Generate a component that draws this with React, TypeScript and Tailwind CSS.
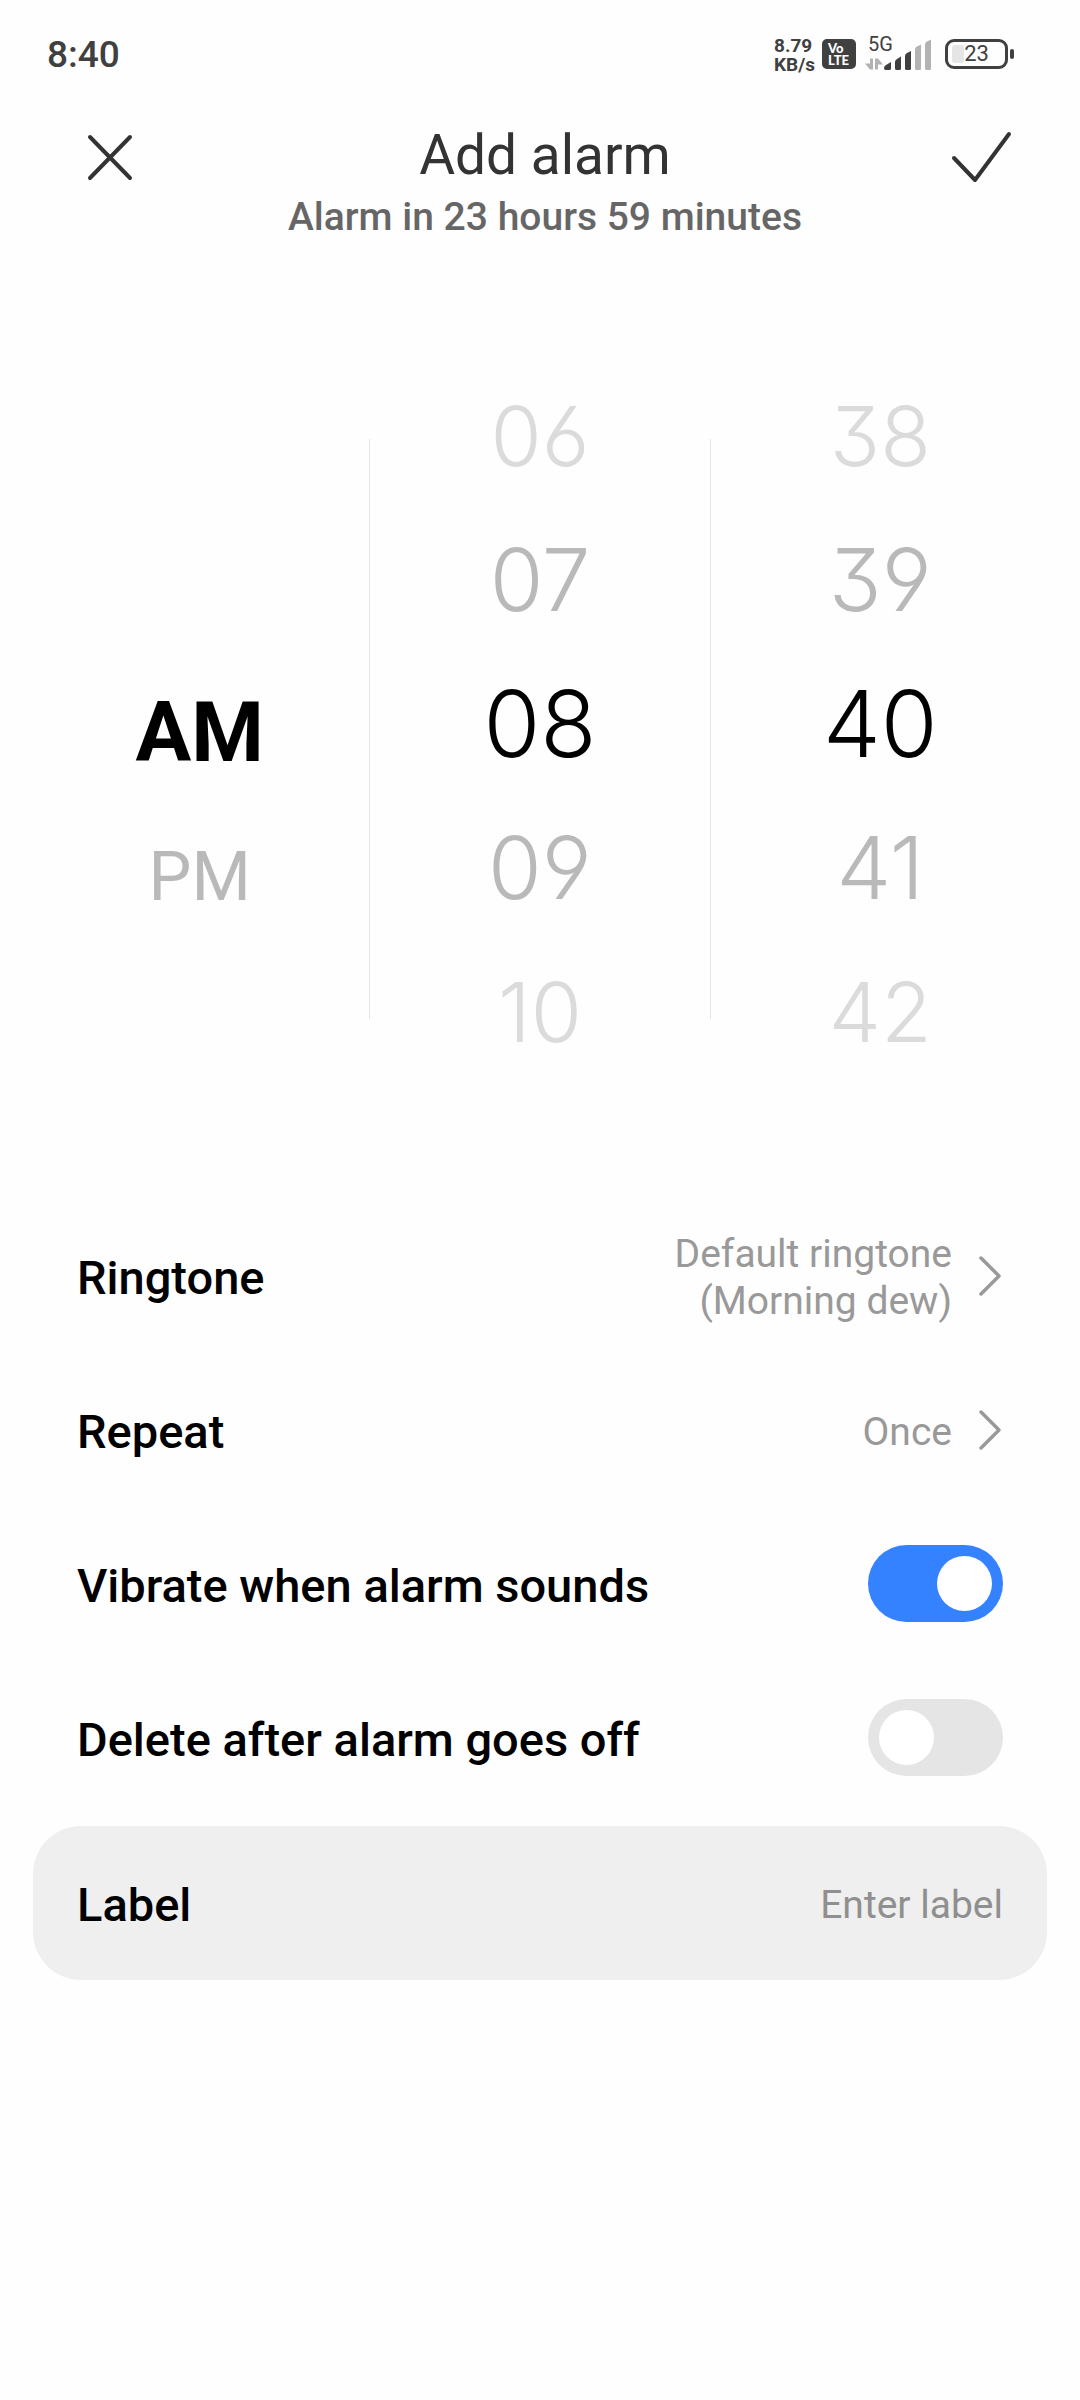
import { useState } from 'react';

function StatusBar() {
  return (
    <div className="flex h-[104px] items-center justify-between pt-1 pr-[66px] pl-[47px] text-[#404040]">
      <time className="text-[37px] leading-none font-medium">8:40</time>
      <div className="flex items-center">
        <div className="w-[48px] pt-[2px] text-[19px] leading-[19px] font-bold">
          <div>8.79</div>
          <div>KB/s</div>
        </div>
        <div className="flex h-[30px] w-[34px] flex-col justify-center rounded-[5px] bg-[#404040] pl-[6px] font-[Lato,sans-serif] text-[13px] leading-[12px] font-black text-white">
          <span>Vo</span>
          <span>LTE</span>
        </div>
        <div className="relative ml-[9px] h-[34px] w-[68px]">
          <span className="absolute -top-[3px] left-[3px] text-[20px] leading-[20px]">5G</span>
          <svg className="h-full w-full" viewBox="0 0 68 34" aria-hidden="true">
            <g fill="#b3b3b3">
              <path d="M5 21.5v11h3v-11zM5 32.500L0 26.500h5zM10 21.500v11h3v-11zM13 21.500l5 6h-5z" />
              <path d="M50 12.500q0-2 2-3l4-2v24q0 1.500-1.500 1.500h-3q-1.500 0-1.500-1.500z" />
              <path d="M60 7.500q0-2 2-3l4-2v29q0 1.500-1.500 1.500h-3q-1.500 0-1.500-1.500z" />
            </g>
            <g fill="#404040">
              <path d="M19 31q0-2 2-3l5-3v6.500q0 1.500-1.500 1.500h-4q-1.500 0-1.500-2z" />
              <path d="M30 25q0-2 2-3l4-2.500v12q0 1.500-1.500 1.500h-3q-1.500 0-1.500-1.500z" />
              <path d="M40 19q0-2 2-3l4-2v17.500q0 1.500-1.500 1.500h-3q-1.500 0-1.500-1.500z" />
            </g>
          </svg>
        </div>
        <div className="ml-[12px] flex items-center gap-[2px]">
          <div className="relative flex h-[30px] w-[63px] items-center justify-center rounded-[9px] border-[3px] border-[#404040]">
            <span className="absolute top-[3px] bottom-[3px] left-[4px] w-[12px] rounded-[3px] bg-[#e5e5e5]" />
            <span className="relative text-[22px] leading-none">23</span>
          </div>
          <span className="h-[10px] w-[4px] rounded-full bg-[#404040]" />
        </div>
      </div>
    </div>
  );
}

function Header() {
  return (
    <header className="flex items-start justify-between px-[66px] pt-[20px]">
      <button type="button" aria-label="Close">
        <svg className="h-[76px] w-[98px]" viewBox="0 0 98 76" fill="none" stroke="#333" strokeWidth="4" strokeLinecap="round" aria-hidden="true">
          <path d="M24 13L64 54M64 13L24 54" />
        </svg>
      </button>
      <div className="text-center">
        <h1 className="text-[55px] leading-[62px] text-[#333]">Add alarm</h1>
        <p className="text-[39px] leading-[62px] font-medium text-[#666]">Alarm in 23 hours 59 minutes</p>
      </div>
      <button type="button" aria-label="Save">
        <svg className="h-[76px] w-[88px]" viewBox="0 0 88 76" fill="none" stroke="#333" strokeWidth="4" strokeLinecap="round" strokeLinejoin="round" aria-hidden="true">
          <path d="M28 34L49 56L83 10" />
        </svg>
      </button>
    </header>
  );
}

const rowStyle = [
  'text-[83px] text-[#dbdbdb]',
  'text-[87px] text-[#b9b9b9]',
  'text-[92px] text-black',
  'text-[87px] text-[#b9b9b9]',
  'text-[83px] text-[#dbdbdb]',
];

function NumberWheel({ label, values }: { label: string; values: string[] }) {
  return (
    <div
      role="listbox"
      aria-label={label}
      className="flex flex-1 flex-col font-[Inter,sans-serif] font-light [font-feature-settings:'cv03','cv04','cv09']"
    >
      {values.map((value, i) => (
        <button
          key={value}
          type="button"
          role="option"
          aria-selected={i === 2}
          className={`h-[144px] leading-[144px] ${rowStyle[i]}`}
        >
          {value}
        </button>
      ))}
    </div>
  );
}

function Divider() {
  return <div className="mt-[75px] mb-[65px] w-px bg-[#e4e4e4]" />;
}

function TimePicker() {
  return (
    <section aria-label="Time" className="mt-[116px] flex px-[30px]">
      <div role="listbox" aria-label="AM or PM" className="flex flex-1 flex-col pt-[297px]">
        <button type="button" role="option" aria-selected="true" className="h-[144px] text-[83px] leading-[144px] font-bold text-black">
          AM
        </button>
        <button type="button" role="option" aria-selected="false" className="h-[144px] text-[68px] leading-[144px] text-[#b9b9b9]">
          PM
        </button>
      </div>
      <Divider />
      <NumberWheel label="Hour" values={['06', '07', '08', '09', '10']} />
      <Divider />
      <NumberWheel label="Minute" values={['38', '39', '40', '41', '42']} />
    </section>
  );
}

function LinkRow({ title, lines }: { title: string; lines: string[] }) {
  return (
    <button type="button" className="flex h-[154px] w-full items-center justify-between px-[77px] text-left">
      <span className="pt-[6px] text-[47px] font-medium text-black">{title}</span>
      <span className="flex items-center gap-[24px]">
        <span className="pt-[6px] text-right text-[39px] leading-[47px] text-[#999]">
          {lines.map((line) => (
            <span key={line} className="block">
              {line}
            </span>
          ))}
        </span>
        <svg className="h-[44px] w-[27px]" viewBox="0 0 27 44" fill="none" stroke="#999" strokeWidth="3.500" strokeLinecap="round" strokeLinejoin="round" aria-hidden="true">
          <path d="M5 5L23 23L5 41" />
        </svg>
      </span>
    </button>
  );
}

function SwitchRow({ title, initial }: { title: string; initial: boolean }) {
  const [on, setOn] = useState(initial);
  return (
    <label className="flex h-[154px] items-center justify-between px-[77px]">
      <span className="pt-[6px] text-[47px] font-medium text-black">{title}</span>
      <input
        type="checkbox"
        role="switch"
        checked={on}
        onChange={() => setOn(!on)}
        className="flex h-[77px] w-[135px] appearance-none items-center rounded-full bg-[#e5e5e5] px-[11px] before:h-[55px] before:w-[55px] before:rounded-full before:bg-white checked:justify-end checked:bg-[#3482ff]"
      />
    </label>
  );
}

export default function App() {
  return (
    <main className="min-h-screen bg-[#fefefe] font-[Roboto,sans-serif]">
      <StatusBar />
      <Header />
      <TimePicker />
      <section aria-label="Alarm settings" className="mt-[114px]">
        <LinkRow title="Ringtone" lines={['Default ringtone', '(Morning dew)']} />
        <LinkRow title="Repeat" lines={['Once']} />
        <SwitchRow title="Vibrate when alarm sounds" initial={true} />
        <SwitchRow title="Delete after alarm goes off" initial={false} />
        <div className="mx-[33px] mt-[12px] flex h-[154px] items-center justify-between gap-8 rounded-[48px] bg-[#efefef] px-[44px]">
          <label htmlFor="alarm-label" className="pt-1 text-[47px] font-medium text-black">
            Label
          </label>
          <input
            id="alarm-label"
            type="text"
            placeholder="Enter label"
            className="min-w-0 flex-1 bg-transparent pt-1 text-right text-[39px] text-black outline-none placeholder:text-[#8f8f8f]"
          />
        </div>
      </section>
    </main>
  );
}
